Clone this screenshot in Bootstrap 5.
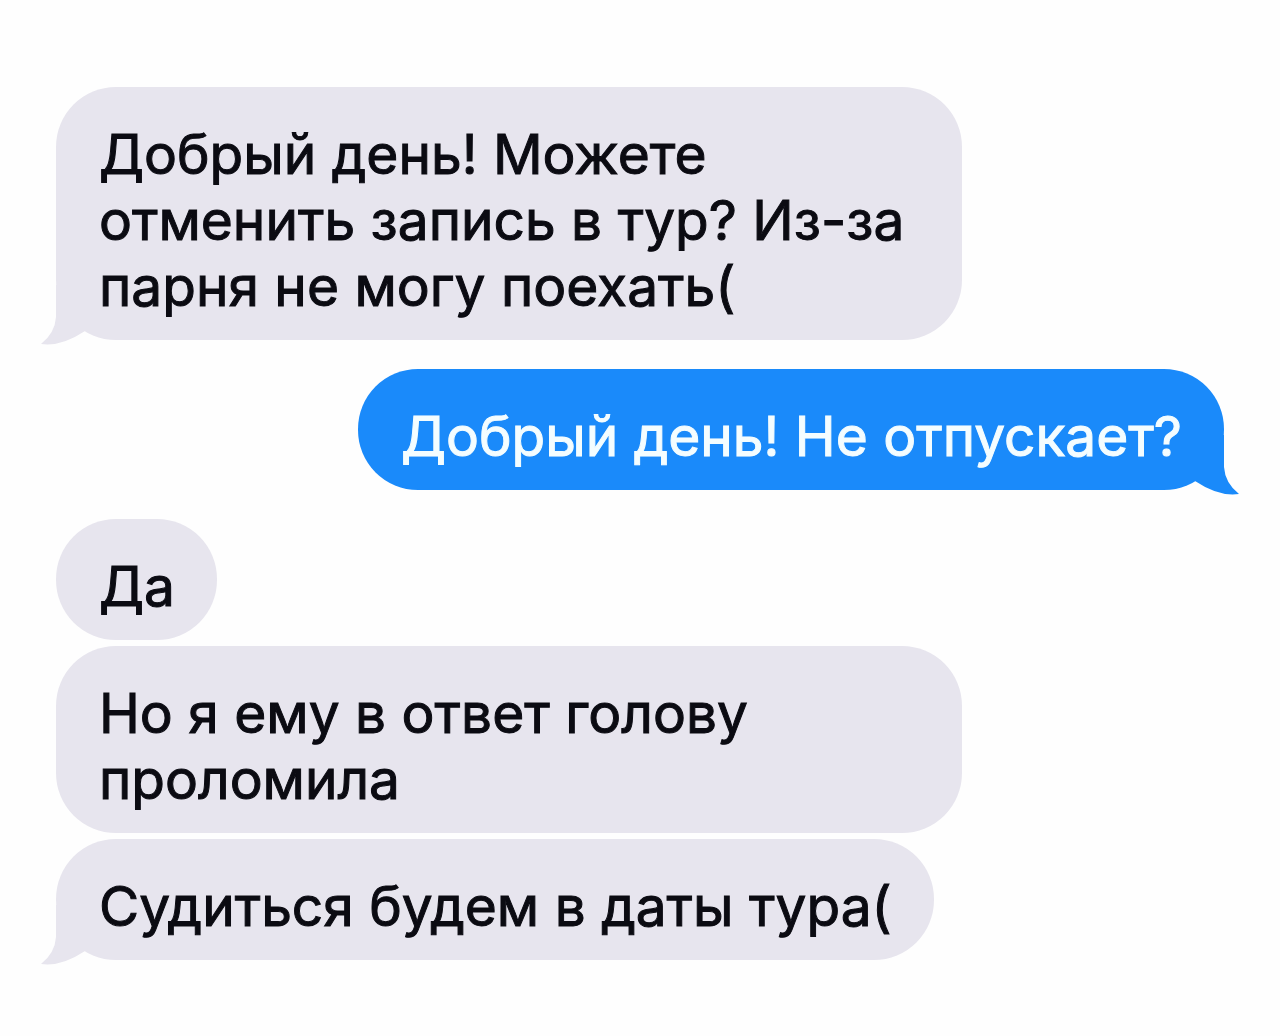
<!DOCTYPE html>
<html lang="ru">
<head>
<meta charset="utf-8">
<meta name="viewport" content="width=device-width, initial-scale=1">
<title>Сообщения</title>
<link href="https://cdn.jsdelivr.net/npm/bootstrap@5.3.0/dist/css/bootstrap.min.css" rel="stylesheet">
<style>
body { background: #fefefe; font-family: Inter, "Liberation Sans", sans-serif; }
.chat { padding: 87px 56px 72px; }
.bubble { position: relative; padding: 34px 42px 21px 43px; border-radius: 60px; font-size: 55px; line-height: 66px; max-width: 906px; -webkit-text-stroke: 1px currentColor; }
.bubble.incoming { background: #e7e5ee; color: #0b0b12; }
.bubble.outgoing { background: #1a8afa; color: #f4fdff; }
.tail { position: absolute; bottom: -5px; width: 60px; height: 60px; }
.incoming .tail { left: -15px; fill: #e7e5ee; }
.outgoing .tail { right: -15px; fill: #1a8afa; }
.incoming + .outgoing, .outgoing + .incoming { margin-top: 29px; }
.incoming + .incoming { margin-top: 6px; }
</style>
</head>
<body>
<main class="chat d-flex flex-column align-items-start">
  <div class="bubble incoming">Добрый день! Можете отменить запись в тур? Из-за парня не могу поехать(
    <svg class="tail" viewBox="0 0 60 60" aria-hidden="true"><path d="M15 0V32Q14 48 0 59Q20 62 44 46V0Z"/></svg>
  </div>
  <div class="bubble outgoing align-self-end">Добрый день! Не отпускает?
    <svg class="tail" viewBox="0 0 60 60" aria-hidden="true"><path d="M45 0V32Q46 48 60 59Q40 62 16 46V0Z"/></svg>
  </div>
  <div class="bubble incoming">Да</div>
  <div class="bubble incoming">Но я ему в ответ голову проломила</div>
  <div class="bubble incoming">Судиться будем в даты тура(
    <svg class="tail" viewBox="0 0 60 60" aria-hidden="true"><path d="M15 0V32Q14 48 0 59Q20 62 44 46V0Z"/></svg>
  </div>
</main>
<script src="https://cdn.jsdelivr.net/npm/bootstrap@5.3.0/dist/js/bootstrap.bundle.min.js"></script>
</body>
</html>
